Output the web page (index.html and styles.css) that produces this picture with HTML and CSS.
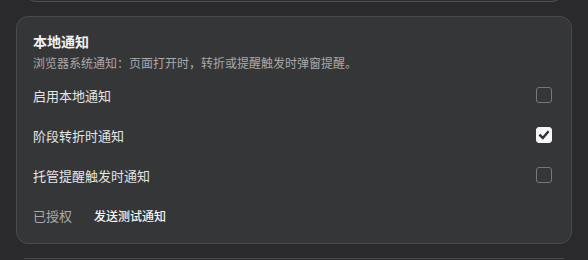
FILE: index.html
```html
<!DOCTYPE html>
<html lang="zh-CN">
<head>
<meta charset="utf-8">
<link rel="stylesheet" href="styles.css">
</head>
<body>
<div class="stack">
  <div class="card stub stub-top"></div>
  <section class="card main">
    <h2 class="title">本地通知</h2>
    <p class="desc">浏览器系统通知：页面打开时，转折或提醒触发时弹窗提醒。</p>
    <div class="rows">
      <label class="row"><span>启用本地通知</span><span class="box"></span></label>
      <label class="row"><span>阶段转折时通知</span><span class="box checked"><svg viewBox="0 0 16 16" width="16" height="16"><path d="M4.2 8.4 L6.8 11 L11.8 5.2" fill="none" stroke="#2f3033" stroke-width="2.4" stroke-linecap="square" stroke-linejoin="miter"/></svg></span></label>
      <label class="row"><span>托管提醒触发时通知</span><span class="box"></span></label>
      <div class="row footer"><span class="status">已授权</span><button class="btn">发送测试通知</button></div>
    </div>
  </section>
  <div class="card stub stub-bottom"></div>
</div>
</body>
</html>
```
FILE: styles.css
```css
* { box-sizing: border-box; }
html, body { margin: 0; height: 100%; }
body {
  background: #2a2a2c;
  font-family: "Noto Sans CJK SC", "Noto Sans", sans-serif;
  color: #e6e6e6;
  overflow: hidden;
}
.stack {
  display: flex;
  flex-direction: column;
  gap: 14px;
  padding: 0 16px;
}
.card {
  border: 1px solid #4a4a4d;
  border-radius: 12px;
  background: #353638;
}
.stub {
  margin: 0 8px;
  background: #2e2e30;
}
.stub-top { height: 40px; margin-top: -38px; border-color: #505053; }
.stub-bottom { height: 1px; border-radius: 12px 12px 0 0; border-bottom: 0; }
.main {
  padding: 14px 19px 8px 16px;
}
.title {
  margin: 0;
  font-size: 14px;
  line-height: 20px;
  font-weight: 700;
  color: #f2f2f2;
}
.desc {
  margin: 3px 0 0;
  font-size: 12px;
  line-height: 18px;
  color: #a9a9ab;
}
.rows {
  margin-top: 3px;
  display: flex;
  flex-direction: column;
}
.row {
  height: 40px;
  display: flex;
  align-items: center;
  justify-content: space-between;
  font-size: 13px;
  color: #e4e4e4;
}
.box {
  width: 16px;
  height: 16px;
  border: 1.5px solid #78787b;
  border-radius: 3px;
  display: flex;
  align-items: center;
  justify-content: center;
}
.box.checked {
  background: #f7f7f9;
  border-color: #f7f7f9;
}
.box svg { display: block; flex: none; }
.footer {
  justify-content: flex-start;
  gap: 22px;
}
.status { color: #a9a9ab; font-size: 13px; }
.btn {
  background: none;
  border: 0;
  padding: 0;
  font: inherit;
  font-size: 12px;
  font-weight: 500;
  color: #f4f4f4;
}
```
